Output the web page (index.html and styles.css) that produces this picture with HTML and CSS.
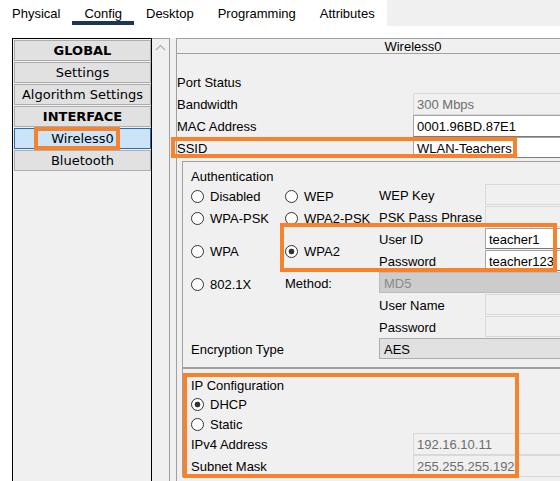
FILE: index.html
```html
<!DOCTYPE html>
<html lang="en">
<head>
    <meta charset="UTF-8">
    <meta name="viewport" content="width=device-width, initial-scale=1.0">
    <title>Wireless0 - Config</title>
    <link rel="stylesheet" href="styles.css">
</head>
<body>

    <!-- Top tabs -->
    <div class="tabs">
        <div class="tab">Physical</div>
        <div class="tab active">Config</div>
        <div class="tab">Desktop</div>
        <div class="tab">Programming</div>
        <div class="tab">Attributes</div>
    </div>

    <div class="workspace">

        <!-- Left list -->
        <div class="sidebar">
            <div class="list">
                <div class="item head">GLOBAL</div>
                <div class="item">Settings</div>
                <div class="item">Algorithm Settings</div>
                <div class="item head">INTERFACE</div>
                <div class="item selected">Wireless0<span class="mark mark-item"></span></div>
                <div class="item">Bluetooth</div>
            </div>
            <div class="scroll">
                <svg class="arrow" width="11" height="7" viewBox="0 0 11 7">
                    <path d="M1 6 L5.5 1.5 L10 6" fill="none" stroke="#b4b4b4" stroke-width="1.4"/>
                </svg>
            </div>
        </div>

        <!-- Right panel -->
        <div class="panel">
            <div class="panel-title">Wireless0</div>
            <div class="panel-body">
                <div class="row"><span class="label">Port Status</span></div>
                <div class="row">
                    <span class="label">Bandwidth</span>
                    <div class="field off">300 Mbps</div>
                </div>
                <div class="row">
                    <span class="label">MAC Address</span>
                    <div class="field on">0001.96BD.87E1</div>
                </div>
                <div class="row short">
                    <span class="label">SSID</span>
                    <div class="field on">WLAN-Teachers</div>
                    <span class="mark mark-ssid"></span>
                </div>

                <!-- Authentication -->
                <div class="group auth">
                    <div class="group-title">Authentication</div>
                    <div class="auth-grid">
                        <div class="opt"><span class="radio"></span>Disabled</div>
                        <div class="opt"><span class="radio"></span>WEP</div>
                        <div class="cell">WEP Key</div>
                        <div class="field off"></div>

                        <div class="opt"><span class="radio"></span>WPA-PSK</div>
                        <div class="opt"><span class="radio"></span>WPA2-PSK</div>
                        <div class="cell">PSK Pass Phrase</div>
                        <div class="field off"></div>

                        <div class="opt tall"><span class="radio"></span>WPA</div>
                        <div class="opt tall"><span class="radio checked"></span>WPA2</div>
                        <div class="cell">User ID</div>
                        <div class="field on">teacher1</div>
                        <div class="cell">Password</div>
                        <div class="field on">teacher123</div>

                        <div class="opt"><span class="radio"></span>802.1X</div>
                        <div class="cell">Method:</div>
                        <div class="field wide select off-select">MD5</div>

                        <div class="cell skip">User Name</div>
                        <div class="field off"></div>
                        <div class="cell skip">Password</div>
                        <div class="field off"></div>

                        <div class="cell span2">Encryption Type</div>
                        <div class="field wide select">AES</div>

                        <span class="mark mark-wpa2"></span>
                    </div>
                </div>

                <!-- IP Configuration -->
                <div class="group ip">
                    <div class="group-title">IP Configuration</div>
                    <div class="opt ip-opt"><span class="radio checked"></span>DHCP</div>
                    <div class="opt ip-opt"><span class="radio"></span>Static</div>
                    <div class="row">
                        <span class="label ip-label">IPv4 Address</span>
                        <div class="field off">192.16.10.11</div>
                    </div>
                    <div class="row">
                        <span class="label ip-label">Subnet Mask</span>
                        <div class="field off">255.255.255.192</div>
                    </div>
                    <span class="mark mark-ip"></span>
                </div>
            </div>
        </div>
    </div>

</body>
</html>
```

FILE: styles.css
```css
/* Global */
body {
    margin: 0;
    width: 560px;
    height: 481px;
    overflow: hidden;
    background: #fff;
    font-family: "Liberation Sans", Arial, sans-serif;
    font-size: 13px;
    color: #000;
}

/* Tabs */
.tabs {
    display: flex;
    height: 26px;
    background: #f0f0f0;
}

.tab {
    box-sizing: border-box;
    height: 26px;
    padding: 6px 12px 0;
    line-height: 15px;
    background: #fff;
    white-space: nowrap;
}

.tab.active::after {
    content: "";
    display: block;
    height: 4px;
    margin: 0 -12px;
    background: #1c3556;
}

/* Work area */
.workspace {
    display: flex;
    gap: 6px;
    height: 443px;
    margin: 12px 0 0 12px;
    background: #f0f0f0;
}

.sidebar {
    display: flex;
    flex: none;
}

.list {
    box-sizing: border-box;
    width: 140px;
    padding: 1px 0 0 1px;
    border: 1px solid #000;
    border-bottom: none;
}

.item {
    position: relative;
    box-sizing: border-box;
    height: 21px;
    margin-bottom: 1px;
    border: 1px solid #adadad;
    background: #e1e1e1;
    font-family: "DejaVu Sans", Verdana, sans-serif;
    line-height: 19px;
    text-align: center;
}

.item.head {
    font-weight: bold;
}

.item.selected {
    background: #cce4f7;
    border-color: #2a6cb0;
}

.scroll {
    box-sizing: border-box;
    width: 18px;
    border-top: 1px solid #a0a0a0;
    border-right: 1px solid #a0a0a0;
}

.arrow {
    display: block;
    margin: 5px 0 0 3px;
}

/* Highlight boxes */
.mark {
    position: absolute;
    box-sizing: border-box;
    border: 4px solid #f7822b;
    z-index: 2;
}

.mark-item {
    left: 19px;
    top: -2px;
    width: 86px;
    height: 23px;
}

.mark-ssid {
    left: -6px;
    top: 0;
    width: 346px;
    height: 21px;
}

.mark-wpa2 {
    left: 89px;
    top: 39px;
    width: 277px;
    height: 49px;
}

.mark-ip {
    left: 0;
    top: 4px;
    width: 336px;
    height: 105px;
}

/* Right panel */
.panel {
    flex: 1;
    min-width: 0;
    border-top: 1px solid #a0a0a0;
    border-left: 1px solid #a0a0a0;
}

.panel-title {
    height: 14px;
    padding-left: 89px;
    line-height: 16px;
    text-align: center;
    border-bottom: 1px solid #a0a0a0;
}

.panel-body {
    padding-top: 17px;
}

.row {
    position: relative;
    display: flex;
    height: 22px;
    line-height: 24px;
}

.row.short {
    height: 21px;
    line-height: 23px;
}

.label {
    flex: none;
    width: 236px;
    white-space: nowrap;
}

.field {
    box-sizing: border-box;
    flex: 1;
    height: 100%;
    padding-left: 3px;
    line-height: 22px;
    white-space: nowrap;
    overflow: hidden;
}

.field.on {
    background: #fff;
    border: 1px solid #a5a5a5;
    border-bottom-color: #7a7a7a;
    border-right: none;
}

.field.off {
    background: #f0f0f0;
    border: 1px solid #d9d9d9;
    border-right: none;
    color: #6d6d6d;
}

.field.select {
    padding-left: 4px;
    background: #e1e1e1;
    border: 1px solid #adadad;
    border-right: none;
}

.field.off-select {
    background: #cccccc;
    border-color: #bcbcbc;
    color: #8a8a8a;
}

/* Group boxes */
.group {
    position: relative;
    margin-left: 5px;
    padding: 6px 0 7px 8px;
    border-top: 1px solid #a0a0a0;
    border-left: 1px solid #a0a0a0;
}

.auth {
    margin-top: 3px;
    border-bottom: 1px solid #a0a0a0;
}

.ip {
    padding-top: 8px;
    padding-bottom: 0;
}

.group-title {
    height: 16px;
    line-height: 18px;
}

.auth-grid {
    position: relative;
    display: grid;
    grid-template-columns: 94px 94px 106px 1fr;
    grid-auto-rows: 22px;
}

.auth-grid .field {
    height: 21px;
    line-height: 21px;
}

.cell {
    line-height: 24px;
    white-space: nowrap;
}

.cell.skip {
    grid-column: 3;
}

.cell.span2 {
    grid-column: 1 / 3;
}

.field.wide {
    grid-column: 3 / 5;
}

.opt {
    display: flex;
    align-items: center;
    padding-top: 2px;
    white-space: nowrap;
}

.opt.tall {
    grid-row: span 2;
}

.ip-opt {
    box-sizing: border-box;
    height: 20px;
}

.ip-label {
    width: 222px;
}

.radio {
    box-sizing: border-box;
    width: 13px;
    height: 13px;
    margin-right: 6px;
    border: 1px solid #333;
    border-radius: 50%;
    background: #fff;
}

.radio.checked {
    background: radial-gradient(circle, #333 0 2.6px, #fff 3.2px);
}
```
